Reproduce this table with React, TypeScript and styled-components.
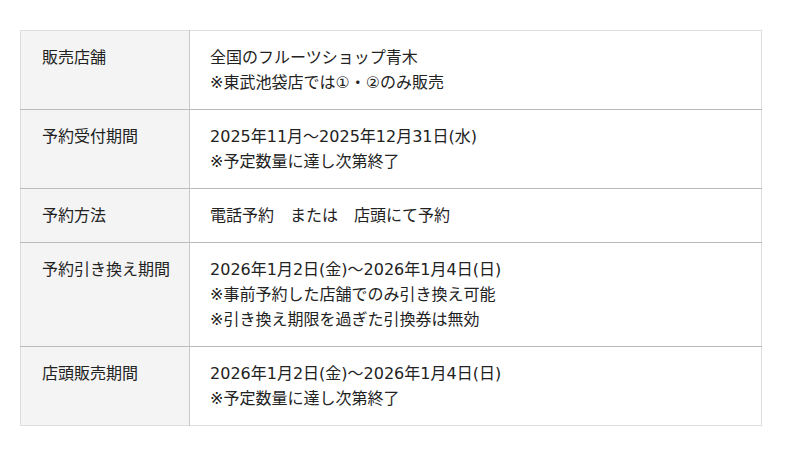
import React from 'react';
import styled, { createGlobalStyle } from 'styled-components';

const GlobalStyle = createGlobalStyle`
    html, body {
        margin: 0;
        padding: 0;
        background: #ffffff;
    }
    body {
        font-family: 'DejaVu Sans', 'Noto Sans CJK JP', sans-serif;
        color: #222222;
    }
`;

interface Row {
    label: string;
    lines: string[];
}

const rows: Row[] = [
    {
        label: '販売店舗',
        lines: ['全国のフルーツショップ青木', '※東武池袋店では①・②のみ販売'],
    },
    {
        label: '予約受付期間',
        lines: ['2025年11月〜2025年12月31日(水)', '※予定数量に達し次第終了'],
    },
    {
        label: '予約方法',
        lines: ['電話予約　または　店頭にて予約'],
    },
    {
        label: '予約引き換え期間',
        lines: [
            '2026年1月2日(金)〜2026年1月4日(日)',
            '※事前予約した店舗でのみ引き換え可能',
            '※引き換え期限を過ぎた引換券は無効',
        ],
    },
    {
        label: '店頭販売期間',
        lines: ['2026年1月2日(金)〜2026年1月4日(日)', '※予定数量に達し次第終了'],
    },
];

const App = () => {
    return (
        <>
            <GlobalStyle />
            <Page>
                <InfoTable>
                    <tbody>
                        {rows.map((row) => (
                            <TableRow key={row.label}>
                                <Label>{row.label}</Label>
                                <Content>
                                    {row.lines.map((line) => (
                                        <Line key={line}>{line}</Line>
                                    ))}
                                </Content>
                            </TableRow>
                        ))}
                    </tbody>
                </InfoTable>
            </Page>
        </>
    );
};

export default App;

const Page = styled.div`
    padding: 30px 38px 30px 20px;
`;
const InfoTable = styled.table`
    width: 742px;
    border-collapse: collapse;
    border: 1px solid #dddddd;
    font-family: 'DejaVu Sans', 'Noto Sans CJK JP', sans-serif;
    font-size: 16px;
    line-height: 25px;
`;
const TableRow = styled.tr`
    & + & {
        border-top: 1px solid #bbbbbb;
    }
`;
const Label = styled.th`
    width: 128px;
    padding: 14px 19px 14px 21px;
    background: #f4f4f4;
    border-right: 1px solid #c8c8c8;
    text-align: left;
    vertical-align: top;
    white-space: nowrap;
    font-family: inherit;
    font-weight: normal;
    color: #222222;
`;
const Content = styled.td`
    padding: 14px 20px;
    vertical-align: top;
    font-family: inherit;
    color: #222222;
`;
const Line = styled.div`
    white-space: nowrap;
`;
